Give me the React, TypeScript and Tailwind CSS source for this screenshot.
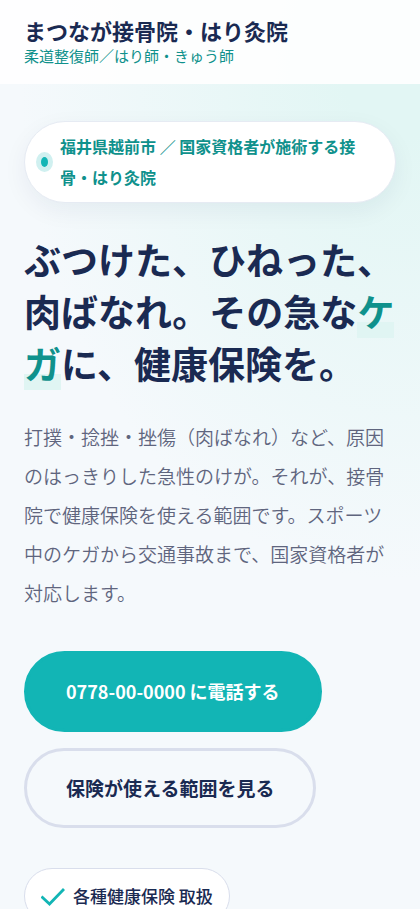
import { ReactNode } from 'react';

const features = ['各種健康保険 取扱'];

function Highlight({ children }: { children: ReactNode }) {
    return (
        <span className="text-[#0f918c] bg-[linear-gradient(transparent_70%,#e0f5f3_70%)]">
            {children}
        </span>
    );
}

function CheckIcon() {
    return (
        <svg
            className="w-6 h-6 shrink-0"
            viewBox="0 0 24 24"
            fill="none"
            stroke="#12b5b5"
            strokeWidth="2.8"
            aria-hidden="true"
        >
            <path d="M0.5 12.5 8.5 20 23 5" />
        </svg>
    );
}

function Header() {
    return (
        <header className="bg-white/90 border-b border-white/40 px-6 pt-4 pb-[15px]">
            <a href="#top" className="inline-flex flex-col">
                <span className="text-[22px] leading-7 font-bold">
                    まつなが接骨院・はり灸院
                </span>
                <span className="text-[15px] leading-6 text-[#0f918c]">
                    柔道整復師／はり師・きゅう師
                </span>
            </a>
        </header>
    );
}

function Hero() {
    return (
        <section className="px-6 pt-[37px] pb-10">
            <p className="flex items-center gap-3 rounded-full border border-[#e6ebf3] bg-white pl-4 pr-7 py-[9px] text-base leading-[31px] font-bold text-[#0f918c] shadow-[0_8px_24px_rgba(20,40,80,0.06)]">
                <span className="w-[7px] h-[10px] shrink-0 rounded-[50%] bg-[#12b5b5] ring-5 ring-[#12b5b5]/20" />
                <span>福井県越前市 ／ 国家資格者が施術する接骨・はり灸院</span>
            </p>

            <h1 className="mt-[30px] text-[37px] leading-[52px] font-bold">
                ぶつけた、ひねった、肉ばなれ。その急な
                <Highlight>ケガ</Highlight>に、健康保険を。
            </h1>

            <p className="mt-7 text-[19px] leading-[39px] font-[350] text-[#5f657e]">
                打撲・捻挫・挫傷（肉ばなれ）など、原因のはっきりした急性のけが。それが、接骨院で健康保険を使える範囲です。スポーツ中のケガから交通事故まで、国家資格者が対応します。
            </p>

            <div className="mt-[39px] flex flex-col items-start gap-4">
                <a
                    href="tel:0778000000"
                    className="rounded-full border-3 border-[#12b5b5] bg-[#12b5b5] px-[39px] py-[18px] text-lg leading-[39px] font-bold text-white"
                >
                    0778-00-0000 に電話する
                </a>
                <a
                    href="#insurance"
                    className="rounded-full border-3 border-[#d9deec] px-[39px] py-[18px] text-[19px] leading-[38px] font-bold"
                >
                    保険が使える範囲を見る
                </a>
            </div>

            <ul className="mt-10 flex flex-wrap gap-3">
                {features.map((feature) => (
                    <li
                        key={feature}
                        className="flex items-center gap-2 rounded-full border border-[#d9deec] bg-white px-4 py-3 text-[17px] leading-[30px] font-medium"
                    >
                        <CheckIcon />
                        {feature}
                    </li>
                ))}
            </ul>
        </section>
    );
}

export default function App() {
    return (
        <div
            id="top"
            lang="ja"
            className="min-h-screen text-[#1a2a52] bg-[#f5f9fc] bg-[radial-gradient(380px_520px_at_95%_60px,#e2f6f4_15%,#f5f9fc)] bg-no-repeat font-['Noto_Sans_CJK_JP',sans-serif]"
        >
            <Header />
            <main>
                <Hero />
            </main>
        </div>
    );
}
